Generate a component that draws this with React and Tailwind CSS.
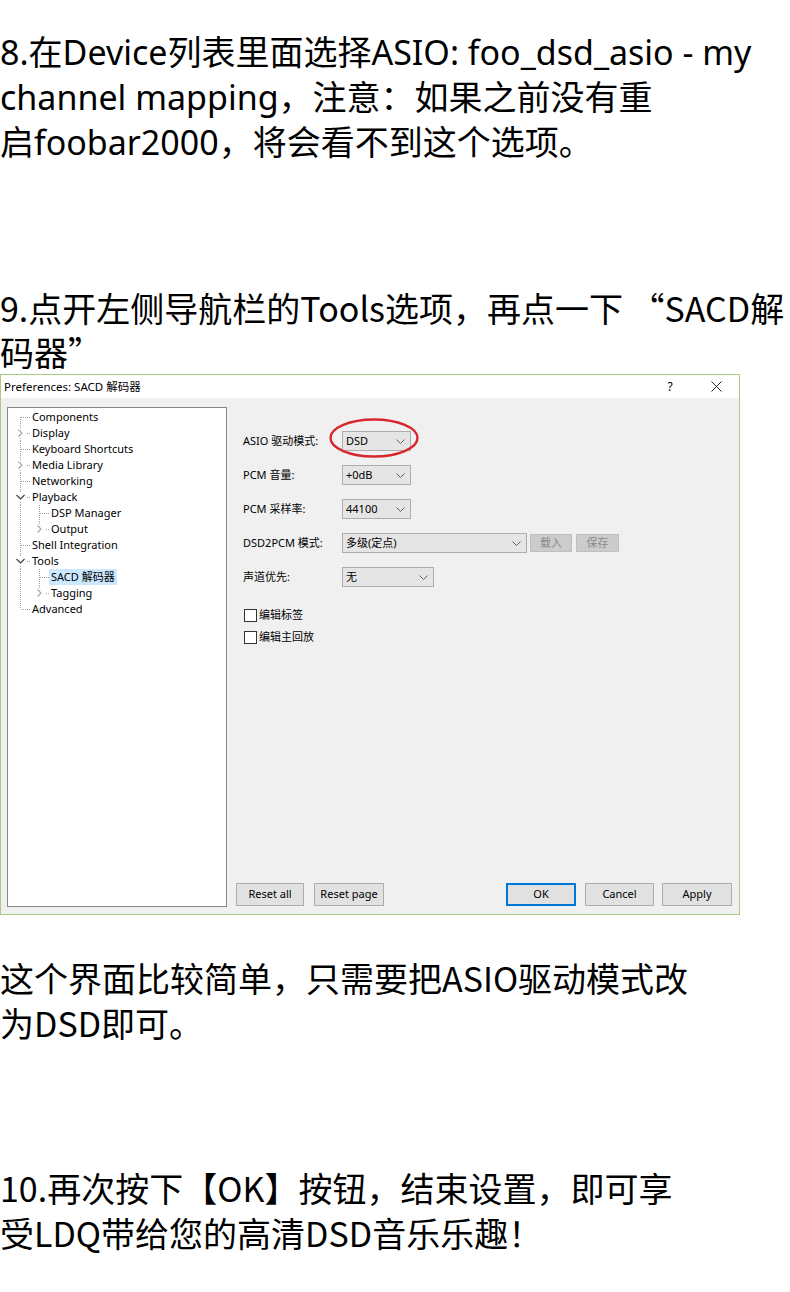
import React from "react";

const tree = [
  { label: "Components", level: 0, first: true },
  { label: "Display", level: 0, exp: "closed" },
  { label: "Keyboard Shortcuts", level: 0 },
  { label: "Media Library", level: 0, exp: "closed" },
  { label: "Networking", level: 0 },
  { label: "Playback", level: 0, exp: "open" },
  { label: "DSP Manager", level: 1 },
  { label: "Output", level: 1, exp: "closed", last: true },
  { label: "Shell Integration", level: 0 },
  { label: "Tools", level: 0, exp: "open" },
  { label: "SACD 解码器", level: 1, selected: true },
  { label: "Tagging", level: 1, exp: "closed", last: true },
  { label: "Advanced", level: 0, last: true },
];

function Cell({ vTop, vBottom, h, exp }) {
  const dot = { stroke: "#a0a0a0", strokeWidth: 1, strokeDasharray: "1 1", shapeRendering: "crispEdges" };
  return (
    <svg width="19" height="16" viewBox="0 0 19 16" className="shrink-0">
      {vTop && !exp && <line x1="9.5" y1="0" x2="9.5" y2="8" style={dot} />}
      {vBottom && !exp && <line x1="9.5" y1="8" x2="9.5" y2="16" style={dot} />}
      {exp && vTop && <line x1="9.5" y1="0" x2="9.5" y2="3" style={dot} />}
      {exp && vBottom && <line x1="9.5" y1="13" x2="9.5" y2="16" style={dot} />}
      {h && !exp && <line x1="10" y1="8.5" x2="19" y2="8.5" style={dot} />}
      {h && exp && <line x1="16" y1="8.5" x2="19" y2="8.5" style={dot} />}
      {exp === "closed" && (
        <path d="M7.5 4.5 L11 8 L7.5 11.5" fill="none" stroke="#a6a6a6" strokeWidth="1.2" />
      )}
      {exp === "open" && (
        <path d="M5.5 6 L9.5 10 L13.5 6" fill="none" stroke="#404040" strokeWidth="1.2" />
      )}
    </svg>
  );
}

function TreeRow({ item }) {
  if (item.level === 0) {
    return (
      <div className="flex h-[16px] items-center">
        <Cell vTop={!item.first} vBottom={!item.last} h exp={item.exp} />
        <span className="px-[2px] leading-[16px]">{item.label}</span>
      </div>
    );
  }
  return (
    <div className="flex h-[16px] items-center">
      <Cell vTop vBottom />
      <Cell vTop vBottom={!item.last} h exp={item.exp} />
      <span className={"px-[2px] leading-[16px] " + (item.selected ? "bg-[#cce8ff]" : "")}>
        {item.label}
      </span>
    </div>
  );
}

function Chevron() {
  return (
    <svg width="9" height="5" viewBox="0 0 9 5" className="shrink-0">
      <path d="M0.5 0.5 L4.5 4.5 L8.5 0.5" fill="none" stroke="#606060" strokeWidth="1" />
    </svg>
  );
}

function Combo({ value, w }) {
  return (
    <div
      className={"flex h-[20px] items-center justify-between border border-[#adadad] bg-[#e5e5e5] pl-[3px] pr-[5px] " + w}
    >
      <span>{value}</span>
      <Chevron />
    </div>
  );
}

function Row({ label, children }) {
  return (
    <div className="flex h-[20px] items-center">
      <div className="w-[99px] shrink-0">{label}</div>
      {children}
    </div>
  );
}

function Btn({ children, w, primary }) {
  return (
    <div
      className={
        "flex h-[23px] items-center justify-center bg-[#e1e1e1] " +
        w +
        " " +
        (primary ? "border-2 border-[#0078d7]" : "border border-[#adadad]")
      }
    >
      {children}
    </div>
  );
}

function Checkbox({ label }) {
  return (
    <div className="flex h-[16px] items-center">
      <div className="ml-[1px] h-[13px] w-[13px] border border-[#333333] bg-white" />
      <span className="ml-[2px]">{label}</span>
    </div>
  );
}

function Dialog() {
  return (
    <div className="flex h-[541px] w-[740px] flex-col border border-[#a9cb82] text-[11px] text-black font-['Noto_Sans','Noto_Sans_CJK_SC',sans-serif]">
      <div className="flex h-[23px] shrink-0 items-center justify-between bg-white pl-[3px]">
        <span className="text-[11.5px]">Preferences: SACD 解码器</span>
        <div className="flex h-full items-center">
          <div className="flex w-[46px] items-center justify-center text-[12px]">?</div>
          <div className="flex w-[46px] items-center justify-center">
            <svg width="11" height="11" viewBox="0 0 11 11">
              <path d="M0.5 0.5 L10.5 10.5 M10.5 0.5 L0.5 10.5" stroke="#222" strokeWidth="1" />
            </svg>
          </div>
        </div>
      </div>
      <div className="flex flex-1 bg-[#f0f0f0] pl-[6px] pt-[9px] pb-[6px]">
        <div className="h-[500px] w-[220px] shrink-0 border border-[#828790] bg-white pl-[3px] pt-[1px]">
          {tree.map((t) => (
            <TreeRow key={t.label} item={t} />
          ))}
        </div>
        <div className="flex flex-1 flex-col justify-between pb-[2px] pl-[9px] pr-[7px]">
          <div className="flex flex-col pl-[7px] pt-[24px]">
            <div className="flex flex-col gap-[14px]">
              <Row label="ASIO 驱动模式:">
                <div className="relative">
                  <Combo value="DSD" w="w-[69px]" />
                  <svg
                    width="92"
                    height="42"
                    viewBox="0 0 92 42"
                    className="pointer-events-none absolute left-[-14px] top-[-14px]"
                  >
                    <ellipse cx="46" cy="21" rx="43.5" ry="18.5" fill="none" stroke="#d7262e" strokeWidth="2.4" />
                  </svg>
                </div>
              </Row>
              <Row label="PCM 音量:">
                <Combo value="+0dB" w="w-[69px]" />
              </Row>
              <Row label="PCM 采样率:">
                <Combo value="44100" w="w-[69px]" />
              </Row>
              <Row label="DSD2PCM 模式:">
                <Combo value="多级(定点)" w="w-[185px]" />
                <div className="ml-[3px] flex h-[18px] w-[42px] items-center justify-center border border-[#bfbfbf] bg-[#cccccc] text-[#8a8a8a]">
                  载入
                </div>
                <div className="ml-[4px] flex h-[18px] w-[43px] items-center justify-center border border-[#bfbfbf] bg-[#cccccc] text-[#8a8a8a]">
                  保存
                </div>
              </Row>
              <Row label="声道优先:">
                <Combo value="无" w="w-[92px]" />
              </Row>
            </div>
            <div className="mt-[20px] flex flex-col gap-[6px]">
              <Checkbox label="编辑标签" />
              <Checkbox label="编辑主回放" />
            </div>
          </div>
          <div className="flex items-center">
            <Btn w="w-[68px]">Reset all</Btn>
            <div className="ml-[10px]">
              <Btn w="w-[70px]">Reset page</Btn>
            </div>
            <div className="flex-1" />
            <Btn w="w-[70px]" primary>
              OK
            </Btn>
            <div className="ml-[9px]">
              <Btn w="w-[69px]">Cancel</Btn>
            </div>
            <div className="ml-[8px]">
              <Btn w="w-[70px]">Apply</Btn>
            </div>
          </div>
        </div>
      </div>
    </div>
  );
}

export default function App() {
  return (
    <div className="flex min-h-[1292px] w-[790px] flex-col bg-white text-black">
      <div className="mt-[30px] whitespace-nowrap text-[34px] leading-[45px] font-['Noto_Sans','Noto_Sans_CJK_SC',sans-serif]">
        <div>8.在Device列表里面选择ASIO: foo_dsd_asio - my</div>
        <div>channel mapping，注意：如果之前没有重</div>
        <div>启foobar2000，将会看不到这个选项。</div>
      </div>
      <div className="mt-[121px] whitespace-nowrap text-[34px] leading-[44px] font-['Noto_Sans_CJK_SC',sans-serif]">
        <div>9.点开左侧导航栏的Tools选项，再点一下 “SACD解</div>
        <div>码器”</div>
      </div>
      <Dialog />
      <div className="mt-[40px] whitespace-nowrap text-[34px] leading-[45px] font-['Noto_Sans_CJK_SC',sans-serif]">
        <div>这个界面比较简单，只需要把ASIO驱动模式改</div>
        <div>为DSD即可。</div>
      </div>
      <div className="mt-[120px] whitespace-nowrap text-[34px] leading-[45px] font-['Noto_Sans_CJK_SC',sans-serif]">
        <div>10.再次按下【OK】按钮，结束设置，即可享</div>
        <div>受LDQ带给您的高清DSD音乐乐趣！</div>
      </div>
    </div>
  );
}
